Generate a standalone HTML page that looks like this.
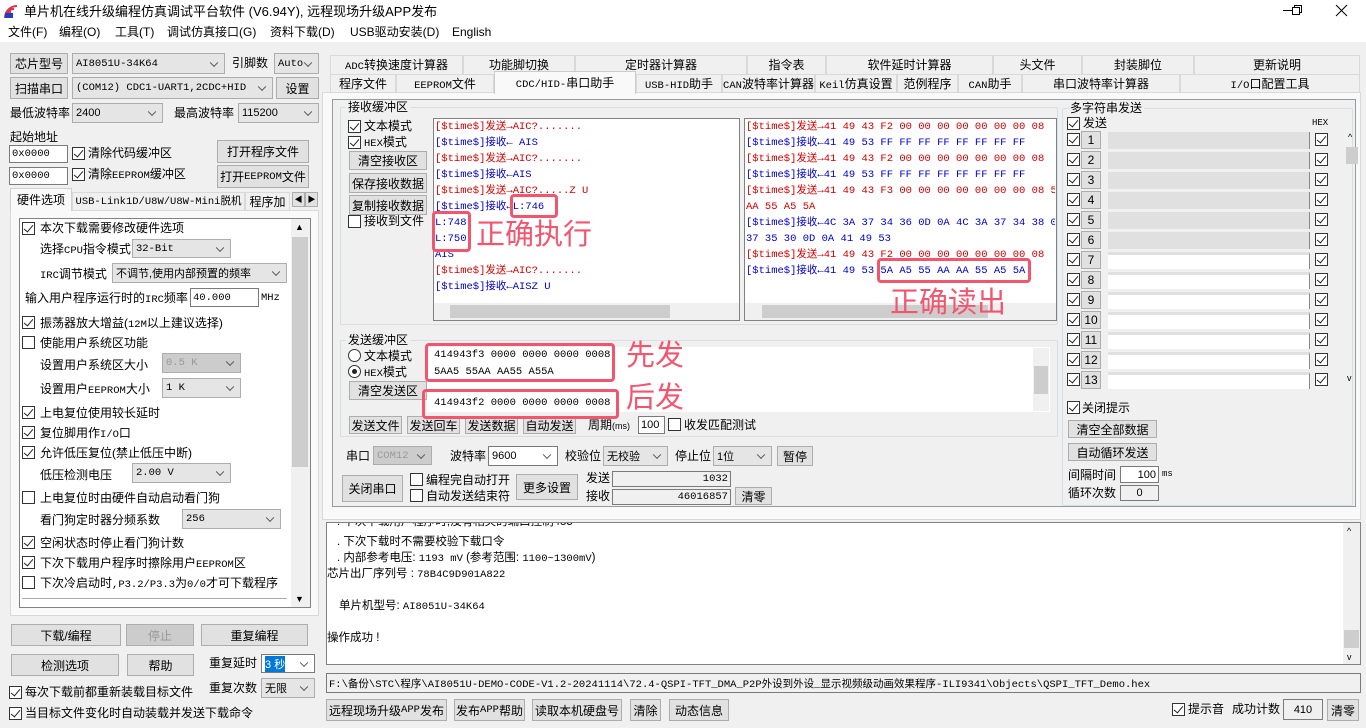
<!DOCTYPE html>
<html><head><meta charset="utf-8">
<style>
*{box-sizing:border-box;margin:0;padding:0}
body{width:1366px;height:728px;overflow:hidden;background:#f0f0f0;font:12px "Liberation Sans","Noto Sans CJK SC",sans-serif;color:#000;position:relative}
.a{position:absolute;white-space:nowrap;line-height:1}
.b{position:absolute;background:#e1e1e1;border:1px solid #adadad;display:flex;align-items:center;justify-content:center;white-space:nowrap;font-size:12px}
.c{position:absolute;background:#e5e5e5;border:1px solid #adadad;white-space:nowrap;padding-left:3px;display:flex;align-items:center;font-size:11px}
.c:after{content:"";position:absolute;right:7px;top:50%;width:5px;height:5px;border-right:1px solid #555;border-bottom:1px solid #555;transform:translateY(-70%) rotate(45deg)}
.i{position:absolute;background:#fff;border:1px solid #7a7a7a;white-space:nowrap;display:flex;align-items:center;padding:0 2px;font-size:11px}
.k{position:absolute;width:13px;height:13px;border:1px solid #333;background:#fff}
.k.on:after{content:"";position:absolute;left:3px;top:0px;width:4px;height:8px;border-right:1.3px solid #222;border-bottom:1.3px solid #222;transform:rotate(40deg)}
.w{position:absolute;background:#fff}
.g{position:absolute;border:1px solid #d5dfe5;border-radius:2px}
.m{font-family:"Liberation Mono","Noto Sans CJK SC",monospace;font-size:10.5px}
.t{position:absolute;border:1px solid #d9d9d9;border-bottom:none;background:#f0f0f0;text-align:center;white-space:nowrap;padding-top:3px;line-height:13px;font-size:12px}
.r{position:absolute;border:3px solid #f2566f;border-radius:4px}
.big{position:absolute;color:#f2566f;font-size:29px;white-space:nowrap;line-height:1}
.red{color:#d00000}.blu{color:#0000c8}
.rl div{height:16px;line-height:16px;white-space:nowrap}
</style></head><body>
<!-- title -->
<div class="w" style="left:0;top:0;width:1366px;height:42px"></div>
<svg class="a" style="left:4px;top:5px" width="16" height="14" viewBox="0 0 16 14"><path d="M1 13 A12 12 0 0 1 13 1 M1 13 A9 9 0 0 1 10 4 M1 13 A6 6 0 0 1 7 7" stroke="#e03050" stroke-width="2" fill="none"/><rect x="1" y="8" width="8" height="5" fill="#2040c0"/></svg>
<div class="a" style="left:24px;top:5px;font-size:13px">单片机在线升级编程仿真调试平台软件 (V6.94Y), 远程现场升级APP发布</div>
<svg class="a" style="left:1276px;top:0" width="90" height="22" viewBox="0 0 90 22"><path d="M7 10.5h10" stroke="#000"/><path d="M16.5 7.5h7v7h-7z M18.5 7.5v-2h7v7h-2" stroke="#000" fill="none"/><path d="M60 5l11 11M71 5l-11 11" stroke="#000"/></svg>
<div class="a" style="left:8px;top:26px">文件(F)</div>
<div class="a" style="left:59px;top:26px">编程(O)</div>
<div class="a" style="left:115px;top:26px">工具(T)</div>
<div class="a" style="left:167px;top:26px">调试仿真接口(G)</div>
<div class="a" style="left:270px;top:26px">资料下载(D)</div>
<div class="a" style="left:350px;top:26px">USB驱动安装(D)</div>
<div class="a" style="left:452px;top:26px">English</div>

<!-- left top -->
<div class="b" style="left:10px;top:53px;width:58px;height:21px">芯片型号</div>
<div class="c m" style="left:72px;top:53px;width:153px;height:21px">AI8051U-34K64</div>
<div class="a" style="left:232px;top:57px">引脚数</div>
<div class="c m" style="left:274px;top:53px;width:45px;height:21px">Auto</div>
<div class="b" style="left:10px;top:77px;width:58px;height:22px">扫描串口</div>
<div class="c m" style="left:72px;top:77px;width:201px;height:22px">(COM12) CDC1-UART1,2CDC+HID</div>
<div class="b" style="left:276px;top:77px;width:43px;height:22px">设置</div>
<div class="a" style="left:10px;top:107px">最低波特率</div>
<div class="c" style="left:72px;top:103px;width:91px;height:20px">2400</div>
<div class="a" style="left:174px;top:107px">最高波特率</div>
<div class="c" style="left:238px;top:103px;width:81px;height:20px">115200</div>
<div class="a" style="left:10px;top:131px">起始地址</div>
<div class="i m" style="left:9px;top:145px;width:59px;height:18px">0x0000</div>
<div class="k on" style="left:72px;top:147px"></div><div class="a" style="left:88px;top:147px">清除代码缓冲区</div>
<div class="b" style="left:217px;top:140px;width:92px;height:23px">打开程序文件</div>
<div class="i m" style="left:9px;top:167px;width:59px;height:18px">0x0000</div>
<div class="k on" style="left:72px;top:168px"></div><div class="a" style="left:88px;top:168px">清除<span class="m">EEPROM</span>缓冲区</div>
<div class="b" style="left:217px;top:165px;width:92px;height:23px">打开<span class="m">EEPROM</span>文件</div>
<!-- left tabs -->
<div class="a" style="left:10px;top:210px;width:309px;height:406px;border:1px solid #d9d9d9;background:#f9f9f9"></div>
<div class="t" style="left:10px;top:188px;width:62px;height:23px;background:#f9f9f9;border-color:#d0d0d0;padding-top:5px">硬件选项</div>
<div class="t m" style="left:72px;top:192px;width:173px;height:18px;font-size:10.5px">USB-Link1D/U8W/U8W-Mini脱机</div>
<div class="t" style="left:245px;top:192px;width:45px;height:18px;overflow:hidden">程序加</div>
<div class="b" style="left:292px;top:192px;width:13px;height:15px;font-size:8px">◀</div>
<div class="b" style="left:305px;top:192px;width:13px;height:15px;font-size:8px">▶</div>
<div class="w" style="left:19px;top:218px;width:292px;height:390px;border:1px solid #828282"></div>
<div class="a" style="left:291px;top:219px;width:19px;height:388px;background:#f0f0f0"></div>
<div class="a" style="left:292px;top:237px;width:16px;height:230px;background:#cdcdcd"></div>
<div class="a" style="left:295px;top:223px;font-size:9px">▲</div>
<div class="a" style="left:295px;top:595px;font-size:9px">▼</div>
<div class="k on" style="left:22px;top:222px"></div><div class="a" style="left:40px;top:222px">本次下载需要修改硬件选项</div>
<div class="a" style="left:40px;top:243px">选择<span class="m">CPU</span>指令模式</div><div class="c m" style="left:132px;top:239px;width:99px;height:19px">32-Bit</div>
<div class="a" style="left:40px;top:268px"><span class="m">IRC</span>调节模式</div><div class="c" style="left:112px;top:263px;width:175px;height:20px">不调节,使用内部预置的频率</div>
<div class="a" style="left:25px;top:292px">输入用户程序运行时的<span class="m">IRC</span>频率</div><div class="i m" style="left:190px;top:288px;width:69px;height:19px">40.000</div><div class="a m" style="left:261px;top:293px">MHz</div>
<div class="k on" style="left:22px;top:316px"></div><div class="a" style="left:40px;top:317px">振荡器放大增益(<span class="m">12M</span>以上建议选择)</div>
<div class="k" style="left:22px;top:336px"></div><div class="a" style="left:40px;top:337px">使能用户系统区功能</div>
<div class="a" style="left:40px;top:359px">设置用户系统区大小</div><div class="c m" style="left:162px;top:353px;width:79px;height:20px;color:#999;background:#ccc">0.5 K</div>
<div class="a" style="left:40px;top:383px">设置用户<span class="m">EEPROM</span>大小</div><div class="c m" style="left:162px;top:378px;width:79px;height:20px">1  K</div>
<div class="k on" style="left:22px;top:406px"></div><div class="a" style="left:40px;top:407px">上电复位使用较长延时</div>
<div class="k on" style="left:22px;top:426px"></div><div class="a" style="left:40px;top:427px">复位脚用作<span class="m">I/O</span>口</div>
<div class="k on" style="left:22px;top:446px"></div><div class="a" style="left:40px;top:447px">允许低压复位(禁止低压中断)</div>
<div class="a" style="left:40px;top:469px">低压检测电压</div><div class="c m" style="left:132px;top:463px;width:99px;height:20px">2.00 V</div>
<div class="k" style="left:22px;top:491px"></div><div class="a" style="left:40px;top:492px">上电复位时由硬件自动启动看门狗</div>
<div class="a" style="left:40px;top:514px">看门狗定时器分频系数</div><div class="c m" style="left:182px;top:509px;width:99px;height:20px">256</div>
<div class="k on" style="left:22px;top:536px"></div><div class="a" style="left:40px;top:537px">空闲状态时停止看门狗计数</div>
<div class="k on" style="left:22px;top:556px"></div><div class="a" style="left:40px;top:557px">下次下载用户程序时擦除用户<span class="m">EEPROM</span>区</div>
<div class="k" style="left:22px;top:576px"></div><div class="a" style="left:40px;top:577px">下次冷启动时<span class="m">,P3.2/P3.3</span>为<span class="m">0/0</span>才可下载程序</div>
<div class="a" style="left:22px;top:598px;width:265px;border-top:1px solid #aaa"></div>
<!-- left bottom -->
<div class="b" style="left:11px;top:624px;width:110px;height:22px">下载/编程</div>
<div class="b" style="left:126px;top:624px;width:68px;height:22px;color:#999;background:#ccc">停止</div>
<div class="b" style="left:201px;top:624px;width:107px;height:22px">重复编程</div>
<div class="b" style="left:11px;top:654px;width:108px;height:22px">检测选项</div>
<div class="b" style="left:127px;top:654px;width:67px;height:22px">帮助</div>
<div class="a" style="left:209px;top:657px">重复延时</div>
<div class="c" style="left:261px;top:654px;width:54px;height:19px;background:#fff;border-color:#7a7a7a"><span style="background:#0078d7;color:#fff">3 秒</span></div>
<div class="k on" style="left:9px;top:686px"></div><div class="a" style="left:25px;top:686px">每次下载前都重新装载目标文件</div>
<div class="a" style="left:209px;top:682px">重复次数</div><div class="c" style="left:261px;top:678px;width:54px;height:20px">无限</div>
<div class="k on" style="left:9px;top:707px"></div><div class="a" style="left:25px;top:707px">当目标文件变化时自动装载并发送下载命令</div>

<!-- right tabs -->
<div class="t" style="left:330px;top:55px;width:133px;height:19px"><span class="m">ADC</span>转换速度计算器</div>
<div class="t" style="left:463px;top:55px;width:112px;height:19px">功能脚切换</div>
<div class="t" style="left:575px;top:55px;width:172px;height:19px">定时器计算器</div>
<div class="t" style="left:747px;top:55px;width:79px;height:19px">指令表</div>
<div class="t" style="left:826px;top:55px;width:167px;height:19px">软件延时计算器</div>
<div class="t" style="left:993px;top:55px;width:89px;height:19px">头文件</div>
<div class="t" style="left:1082px;top:55px;width:112px;height:19px">封装脚位</div>
<div class="t" style="left:1194px;top:55px;width:166px;height:19px">更新说明</div>
<div class="t" style="left:330px;top:74px;width:66px;height:19px">程序文件</div>
<div class="t" style="left:396px;top:74px;width:98px;height:19px"><span class="m">EEPROM</span>文件</div>
<div class="t" style="left:636px;top:74px;width:86px;height:19px"><span class="m">USB-HID</span>助手</div>
<div class="t" style="left:722px;top:74px;width:93px;height:19px"><span class="m">CAN</span>波特率计算器</div>
<div class="t" style="left:815px;top:74px;width:82px;height:19px"><span class="m">Keil</span>仿真设置</div>
<div class="t" style="left:897px;top:74px;width:61px;height:19px">范例程序</div>
<div class="t" style="left:958px;top:74px;width:64px;height:19px"><span class="m">CAN</span>助手</div>
<div class="t" style="left:1022px;top:74px;width:158px;height:19px">串口波特率计算器</div>
<div class="t" style="left:1180px;top:74px;width:180px;height:19px"><span class="m">I/O</span>口配置工具</div>
<div class="a" style="left:322px;top:92px;width:1039px;height:428px;border:1px solid #d9d9d9;background:#f9f9f9"></div>
<div class="t" style="left:494px;top:71px;width:142px;height:23px;background:#f9f9f9;border-color:#ccc;z-index:1;padding-top:5px"><span class="m">CDC/HID-</span>串口助手</div>
<div class="a" style="left:332px;top:99px;width:1024px;height:408px;border:1px solid #999;background:#f0f0f0"></div>
<!-- receive -->
<div class="g" style="left:340px;top:107px;width:718px;height:218px"></div>
<div class="a" style="left:346px;top:101px;background:#f0f0f0;padding:0 2px">接收缓冲区</div>
<div class="k on" style="left:348px;top:120px"></div><div class="a" style="left:364px;top:120px">文本模式</div>
<div class="k on" style="left:348px;top:136px"></div><div class="a" style="left:364px;top:136px"><span class="m">HEX</span>模式</div>
<div class="b" style="left:349px;top:151px;width:78px;height:19px">清空接收区</div>
<div class="b" style="left:349px;top:173px;width:78px;height:20px">保存接收数据</div>
<div class="b" style="left:349px;top:195px;width:78px;height:20px">复制接收数据</div>
<div class="k" style="left:348px;top:215px"></div><div class="a" style="left:364px;top:215px">接收到文件</div>
<div class="w" style="left:433px;top:118px;width:307px;height:203px;border:1px solid #828282"></div>
<div class="w" style="left:744px;top:118px;width:313px;height:203px;border:1px solid #828282"></div>
<div class="a" style="left:745px;top:303px;width:311px;height:17px;background:#f0f0f0"></div>
<div class="a" style="left:762px;top:305px;width:226px;height:13px;background:#cdcdcd"></div>
<div class="a" style="left:434px;top:303px;width:305px;height:17px;background:#f0f0f0"></div>
<div class="a" style="left:450px;top:305px;width:220px;height:13px;background:#cdcdcd"></div>
<div class="a rl m" style="left:435px;top:119px;width:303px;overflow:hidden">
<div class="red">[$time$]发送→AIC?.......</div>
<div class="blu">[$time$]接收←  AIS</div>
<div class="red">[$time$]发送→AIC?.......</div>
<div class="blu">[$time$]接收←AIS</div>
<div class="red">[$time$]发送→AIC?.....Z    U</div>
<div class="blu">[$time$]接收←L:746</div>
<div class="blu">L:748</div>
<div class="blu">L:750</div>
<div class="blu">AIS</div>
<div class="red">[$time$]发送→AIC?.......</div>
<div class="blu">[$time$]接收←AISZ    U</div>
</div>
<div class="a rl m" style="left:746px;top:119px;width:309px;overflow:hidden">
<div class="red">[$time$]发送→41 49 43 F2 00 00 00 00 00 00 00 08</div>
<div class="blu">[$time$]接收←41 49 53 FF FF FF FF FF FF FF FF</div>
<div class="red">[$time$]发送→41 49 43 F2 00 00 00 00 00 00 00 08</div>
<div class="blu">[$time$]接收←41 49 53 FF FF FF FF FF FF FF FF</div>
<div class="red">[$time$]发送→41 49 43 F3 00 00 00 00 00 00 00 08 5</div>
<div class="red">AA 55 A5 5A</div>
<div class="blu">[$time$]接收←4C 3A 37 34 36 0D 0A 4C 3A 37 34 38 0</div>
<div class="blu">37 35 30 0D 0A 41 49 53</div>
<div class="red">[$time$]发送→41 49 43 F2 00 00 00 00 00 00 00 08</div>
<div class="blu">[$time$]接收←41 49 53 5A A5 55 AA AA 55 A5 5A</div>
</div>
<!-- send -->
<div class="g" style="left:340px;top:340px;width:718px;height:97px"></div>
<div class="a" style="left:346px;top:334px;background:#f0f0f0;padding:0 2px">发送缓冲区</div>
<div class="a" style="left:348px;top:349px;width:13px;height:13px;border:1px solid #333;border-radius:50%;background:#fff"></div><div class="a" style="left:364px;top:350px">文本模式</div>
<div class="a" style="left:348px;top:365px;width:13px;height:13px;border:1px solid #333;border-radius:50%;background:#fff"><div style="margin:3px;width:5px;height:5px;border-radius:50%;background:#222"></div></div><div class="a" style="left:364px;top:366px"><span class="m">HEX</span>模式</div>
<div class="b" style="left:349px;top:381px;width:78px;height:19px">清空发送区</div>
<div class="w" style="left:427px;top:347px;width:623px;height:65px"></div>
<div class="a" style="left:1033px;top:348px;width:16px;height:63px;background:#f0f0f0"></div>
<div class="a" style="left:1034px;top:366px;width:14px;height:28px;background:#cdcdcd"></div>
<div class="a m" style="left:434px;top:350px">414943f3 0000 0000 0000 0008</div>
<div class="a m" style="left:434px;top:367px">5AA5 55AA AA55 A55A</div>
<div class="a m" style="left:434px;top:398px">414943f2 0000 0000 0000 0008</div>
<div class="b" style="left:349px;top:416px;width:53px;height:18px">发送文件</div>
<div class="b" style="left:407px;top:416px;width:53px;height:18px">发送回车</div>
<div class="b" style="left:465px;top:416px;width:53px;height:18px">发送数据</div>
<div class="b" style="left:523px;top:416px;width:53px;height:18px">自动发送</div>
<div class="a" style="left:588px;top:419px">周期<span style="font-size:9px">(ms)</span></div>
<div class="i" style="left:638px;top:416px;width:27px;height:18px">100</div>
<div class="k" style="left:668px;top:418px"></div><div class="a" style="left:684px;top:419px">收发匹配测试</div>
<!-- serial -->
<div class="a" style="left:346px;top:450px">串口</div>
<div class="c m" style="left:373px;top:446px;width:59px;height:19px;color:#999;background:#ccc">COM12</div>
<div class="a" style="left:450px;top:450px">波特率</div>
<div class="c" style="left:488px;top:446px;width:70px;height:20px;background:#fff;border-color:#7a7a7a">9600</div>
<div class="a" style="left:565px;top:450px">校验位</div>
<div class="c" style="left:603px;top:446px;width:65px;height:20px">无校验</div>
<div class="a" style="left:675px;top:450px">停止位</div>
<div class="c" style="left:713px;top:446px;width:59px;height:20px">1位</div>
<div class="b" style="left:777px;top:446px;width:36px;height:20px">暂停</div>
<div class="b" style="left:342px;top:475px;width:61px;height:27px">关闭串口</div>
<div class="k" style="left:410px;top:473px"></div><div class="a" style="left:426px;top:474px">编程完自动打开</div>
<div class="k" style="left:410px;top:489px"></div><div class="a" style="left:426px;top:490px">自动发送结束符</div>
<div class="b" style="left:516px;top:474px;width:62px;height:26px">更多设置</div>
<div class="a" style="left:586px;top:472px">发送</div>
<div class="a" style="left:586px;top:490px">接收</div>
<div class="i m" style="left:612px;top:471px;width:119px;height:16px;justify-content:flex-end;background:#f0f0f0">1032</div>
<div class="i m" style="left:612px;top:489px;width:119px;height:16px;justify-content:flex-end;background:#f0f0f0">46016857</div>
<div class="b" style="left:735px;top:487px;width:37px;height:18px">清零</div>
<!-- multi string -->
<div class="g" style="left:1062px;top:108px;width:291px;height:398px"></div>
<div class="a" style="left:1068px;top:102px;background:#f0f0f0;padding:0 2px">多字符串发送</div>
<div class="k on" style="left:1067px;top:117px"></div><div class="a" style="left:1083px;top:117px">发送</div>
<div class="a m" style="left:1312px;top:119px;font-size:9px">HEX</div>
<div class="a" style="left:1346px;top:147px;width:12px;height:17px;background:#cdcdcd"></div>
<div class="a" style="left:1348px;top:133px;font-size:9px">^</div>
<div class="a" style="left:1347px;top:374px;font-size:9px">v</div>
<div class="k on" style="left:1067px;top:401px"></div><div class="a" style="left:1082px;top:402px">关闭提示</div>
<div class="b" style="left:1068px;top:420px;width:89px;height:18px">清空全部数据</div>
<div class="b" style="left:1068px;top:443px;width:89px;height:18px">自动循环发送</div>
<div class="a" style="left:1068px;top:469px">间隔时间</div>
<div class="i" style="left:1120px;top:466px;width:39px;height:17px;justify-content:flex-end">100</div>
<div class="a m" style="left:1162px;top:470px;font-size:9px">ms</div>
<div class="a" style="left:1068px;top:487px">循环次数</div>
<div class="i" style="left:1120px;top:485px;width:39px;height:16px;justify-content:center;background:#f0f0f0">0</div>
<!-- log -->
<div class="w" style="left:326px;top:522px;width:1035px;height:143px;border:1px solid #828282;overflow:hidden"></div>
<div class="a" style="left:1343px;top:523px;width:17px;height:141px;background:#f0f0f0"></div>
<div class="a" style="left:1344px;top:630px;width:15px;height:18px;background:#cdcdcd"></div>
<div class="a" style="left:1347px;top:527px;font-size:9px">^</div>
<div class="a" style="left:1347px;top:653px;font-size:9px">v</div>
<div class="a" style="left:327px;top:523px;width:1010px;height:140px;overflow:hidden;font-size:11.5px">
<div style="position:absolute;top:-6px;left:10px">.  下次下载用户程序时,没有相关的端口控制485</div>
<div style="position:absolute;top:14px;left:10px">.  下次下载时不需要校验下载口令</div>
<div style="position:absolute;top:30px;left:10px">.  内部参考电压: <span class="m">1193 mV</span> (参考范围: <span class="m">1100~1300mV</span>)</div>
<div style="position:absolute;top:46px;left:0">芯片出厂序列号 : <span class="m">78B4C9D901A822</span></div>
<div style="position:absolute;top:78px;left:12px">单片机型号: <span class="m">AI8051U-34K64</span></div>
<div style="position:absolute;top:110px;left:0">操作成功 !</div>
</div>
<div class="i m" style="left:326px;top:673px;width:1035px;height:20px;background:#f0f0f0">F:\备份\STC\程序\AI8051U-DEMO-CODE-V1.2-20241114\72.4-QSPI-TFT_DMA_P2P外设到外设_显示视频级动画效果程序-ILI9341\Objects\QSPI_TFT_Demo.hex</div>
<div class="b" style="left:326px;top:699px;width:121px;height:22px">远程现场升级<span class="m">APP</span>发布</div>
<div class="b" style="left:454px;top:699px;width:71px;height:22px">发布<span class="m">APP</span>帮助</div>
<div class="b" style="left:532px;top:699px;width:90px;height:22px">读取本机硬盘号</div>
<div class="b" style="left:630px;top:699px;width:31px;height:22px">清除</div>
<div class="b" style="left:669px;top:699px;width:60px;height:22px">动态信息</div>
<div class="k on" style="left:1172px;top:703px"></div><div class="a" style="left:1188px;top:703px">提示音</div>
<div class="a" style="left:1232px;top:703px">成功计数</div>
<div class="i" style="left:1283px;top:699px;width:40px;height:21px;justify-content:center;background:#f0f0f0">410</div>
<div class="b" style="left:1327px;top:699px;width:32px;height:22px">清零</div>
<!-- multi rows -->
<div class="a" style="left:0;top:0">
<div class="k on" style="left:1067px;top:133px"></div><div class="b" style="left:1081px;top:131px;width:20px;height:18px">1</div><div class="a" style="left:1108px;top:132px;width:202px;height:17px;background:#e0e0e0;border-right:1px solid #888"></div><div class="k on" style="left:1315px;top:133px"></div>
<div class="k on" style="left:1067px;top:153px"></div><div class="b" style="left:1081px;top:151px;width:20px;height:18px">2</div><div class="a" style="left:1108px;top:152px;width:202px;height:17px;background:#e0e0e0;border-right:1px solid #888"></div><div class="k on" style="left:1315px;top:153px"></div>
<div class="k on" style="left:1067px;top:173px"></div><div class="b" style="left:1081px;top:171px;width:20px;height:18px">3</div><div class="a" style="left:1108px;top:172px;width:202px;height:17px;background:#e0e0e0;border-right:1px solid #888"></div><div class="k on" style="left:1315px;top:173px"></div>
<div class="k on" style="left:1067px;top:193px"></div><div class="b" style="left:1081px;top:191px;width:20px;height:18px">4</div><div class="a" style="left:1108px;top:192px;width:202px;height:17px;background:#e0e0e0;border-right:1px solid #888"></div><div class="k on" style="left:1315px;top:193px"></div>
<div class="k on" style="left:1067px;top:213px"></div><div class="b" style="left:1081px;top:211px;width:20px;height:18px">5</div><div class="a" style="left:1108px;top:212px;width:202px;height:17px;background:#e0e0e0;border-right:1px solid #888"></div><div class="k on" style="left:1315px;top:213px"></div>
<div class="k on" style="left:1067px;top:233px"></div><div class="b" style="left:1081px;top:231px;width:20px;height:18px">6</div><div class="a" style="left:1108px;top:232px;width:202px;height:17px;background:#e0e0e0;border-right:1px solid #888"></div><div class="k on" style="left:1315px;top:233px"></div>
<div class="k on" style="left:1067px;top:253px"></div><div class="b" style="left:1081px;top:251px;width:20px;height:18px">7</div><div class="a" style="left:1108px;top:252px;width:202px;height:17px;background:#fff;border-right:1px solid #888;border-top:3px solid #e0e0e0"></div><div class="k on" style="left:1315px;top:253px"></div>
<div class="k on" style="left:1067px;top:273px"></div><div class="b" style="left:1081px;top:271px;width:20px;height:18px">8</div><div class="a" style="left:1108px;top:272px;width:202px;height:17px;background:#fff;border-right:1px solid #888;border-top:3px solid #e0e0e0"></div><div class="k on" style="left:1315px;top:273px"></div>
<div class="k on" style="left:1067px;top:293px"></div><div class="b" style="left:1081px;top:291px;width:20px;height:18px">9</div><div class="a" style="left:1108px;top:292px;width:202px;height:17px;background:#fff;border-right:1px solid #888;border-top:3px solid #e0e0e0"></div><div class="k on" style="left:1315px;top:293px"></div>
<div class="k on" style="left:1067px;top:313px"></div><div class="b" style="left:1081px;top:311px;width:20px;height:18px">10</div><div class="a" style="left:1108px;top:312px;width:202px;height:17px;background:#fff;border-right:1px solid #888;border-top:3px solid #e0e0e0"></div><div class="k on" style="left:1315px;top:313px"></div>
<div class="k on" style="left:1067px;top:333px"></div><div class="b" style="left:1081px;top:331px;width:20px;height:18px">11</div><div class="a" style="left:1108px;top:332px;width:202px;height:17px;background:#fff;border-right:1px solid #888;border-top:3px solid #e0e0e0"></div><div class="k on" style="left:1315px;top:333px"></div>
<div class="k on" style="left:1067px;top:353px"></div><div class="b" style="left:1081px;top:351px;width:20px;height:18px">12</div><div class="a" style="left:1108px;top:352px;width:202px;height:17px;background:#fff;border-right:1px solid #888;border-top:3px solid #e0e0e0"></div><div class="k on" style="left:1315px;top:353px"></div>
<div class="k on" style="left:1067px;top:373px"></div><div class="b" style="left:1081px;top:371px;width:20px;height:18px">13</div><div class="a" style="left:1108px;top:372px;width:202px;height:17px;background:#fff;border-right:1px solid #888;border-top:3px solid #e0e0e0"></div><div class="k on" style="left:1315px;top:373px"></div>
</div>
<!-- annotations -->
<div class="r" style="left:510px;top:194px;width:48px;height:24px"></div>
<div class="r" style="left:432px;top:211px;width:39px;height:41px"></div>
<div class="big" style="left:476px;top:221px">正确执行</div>
<div class="r" style="left:877px;top:258px;width:154px;height:25px"></div>
<div class="big" style="left:890px;top:289px">正确读出</div>
<div class="r" style="left:425px;top:343px;width:190px;height:39px"></div>
<div class="r" style="left:422px;top:389px;width:197px;height:30px"></div>
<div class="big" style="left:626px;top:342px">先发</div>
<div class="big" style="left:626px;top:384px">后发</div>
</body></html>
